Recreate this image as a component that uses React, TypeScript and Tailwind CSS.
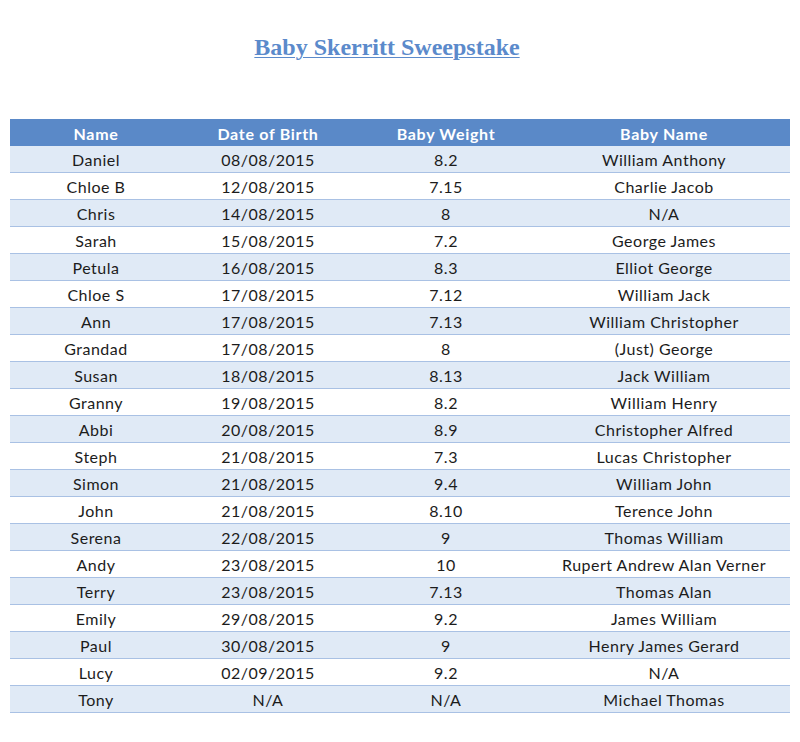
const rows = [
  ["Daniel", "08/08/2015", "8.2", "William Anthony"],
  ["Chloe B", "12/08/2015", "7.15", "Charlie Jacob"],
  ["Chris", "14/08/2015", "8", "N/A"],
  ["Sarah", "15/08/2015", "7.2", "George James"],
  ["Petula", "16/08/2015", "8.3", "Elliot George"],
  ["Chloe S", "17/08/2015", "7.12", "William Jack"],
  ["Ann", "17/08/2015", "7.13", "William Christopher"],
  ["Grandad", "17/08/2015", "8", "(Just) George"],
  ["Susan", "18/08/2015", "8.13", "Jack William"],
  ["Granny", "19/08/2015", "8.2", "William Henry"],
  ["Abbi", "20/08/2015", "8.9", "Christopher Alfred"],
  ["Steph", "21/08/2015", "7.3", "Lucas Christopher"],
  ["Simon", "21/08/2015", "9.4", "William John"],
  ["John", "21/08/2015", "8.10", "Terence John"],
  ["Serena", "22/08/2015", "9", "Thomas William"],
  ["Andy", "23/08/2015", "10", "Rupert Andrew Alan Verner"],
  ["Terry", "23/08/2015", "7.13", "Thomas Alan"],
  ["Emily", "29/08/2015", "9.2", "James William"],
  ["Paul", "30/08/2015", "9", "Henry James Gerard"],
  ["Lucy", "02/09/2015", "9.2", "N/A"],
  ["Tony", "N/A", "N/A", "Michael Thomas"],
]

export default function App() {
  return (
    <main className="w-[800px] h-[742px] bg-white font-['Lato','Open_Sans',sans-serif] text-[#1c1c1c]">
      {/* Titulo */}
      <div className="flex justify-center pt-[32px] pr-[26px] h-[119px]">
        <h1 className="font-['Liberation_Serif',serif] font-bold text-[24px] leading-[30px] text-[#5b8acb] underline underline-offset-2 decoration-1">
          Baby Skerritt Sweepstake
        </h1>
      </div>

      {/* Tabela */}
      <div className="mx-[10px] w-[780px]">
        <div className="grid grid-cols-[172px_172px_184px_252px] h-[27px] items-center pt-[2px] bg-[#5a89c8] text-white font-bold text-[16px] tracking-[0.7px]">
          <div className="text-center">Name</div>
          <div className="text-center">Date of Birth</div>
          <div className="text-center">Baby Weight</div>
          <div className="text-center">Baby Name</div>
        </div>
        {rows.map((r, i) => (
          <div
            key={i}
            className={`grid grid-cols-[172px_172px_184px_252px] h-[27px] items-center pt-[2px] text-[16px] tracking-[0.5px] border-b border-[#a9c1e4] ${
              i % 2 === 0 ? "bg-[#e0eaf6]" : "bg-white"
            }`}
          >
            {r.map((c, j) => (
              <div key={j} className="text-center whitespace-nowrap">
                {c}
              </div>
            ))}
          </div>
        ))}
      </div>
    </main>
  )
}
